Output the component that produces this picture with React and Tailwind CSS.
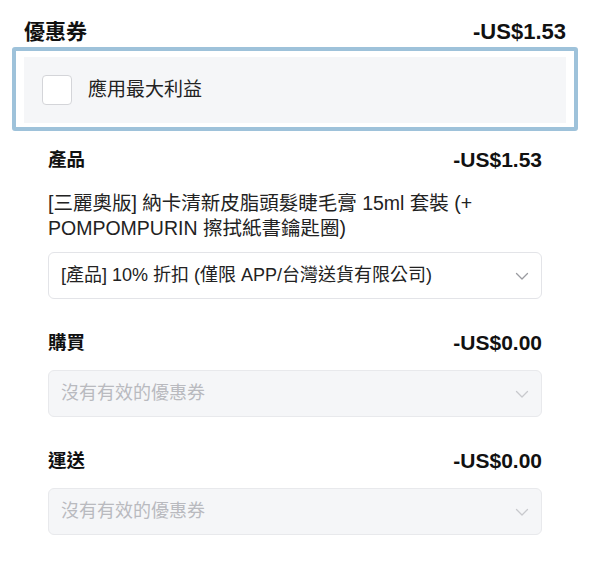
import React from 'react';

const font = { fontFamily: '"Liberation Sans", "Noto Sans CJK TC", sans-serif' };

function Chevron({ className }) {
  return (
    <svg width="14" height="14" viewBox="0 0 14 14" fill="none" className={className}>
      <path d="M1.5 4.5 L7 10 L12.5 4.5" stroke="currentColor" strokeWidth="1.3" strokeLinecap="round" strokeLinejoin="round" />
    </svg>
  );
}

function SelectBox({ label, disabled }) {
  return (
    <div
      className={
        disabled
          ? "flex items-center justify-between h-[47px] px-3 rounded-md border border-[#e8e9ec] bg-[#f5f6f8]"
          : "flex items-center justify-between h-[47px] px-3 rounded-md border border-[#e3e4e8] bg-white"
      }
    >
      <span className={disabled ? "text-[18px] text-[#b9babf]" : "text-[18px] text-[#222]"}>{label}</span>
      <Chevron className={disabled ? "text-[#c8c9cd]" : "text-[#9a9ba0]"} />
    </div>
  );
}

function Section({ title, amount, children }) {
  return (
    <div className="flex flex-col">
      <div className="flex items-center justify-between h-[26px]">
        <span className="text-[18.5px] font-bold text-[#111]">{title}</span>
        <span className="text-[21px] font-bold text-[#111]">{amount}</span>
      </div>
      {children}
    </div>
  );
}

export default function App() {
  return (
    <div className="w-[590px] h-[564px] bg-white px-6 pt-[18px]" style={font}>
      <div className="flex items-center justify-between h-[27px]">
        <span className="text-[21px] font-bold text-[#111]">優惠券</span>
        <span className="text-[22px] font-bold text-[#111]">-US$1.53</span>
      </div>

      {/* highlighted "best benefit" row */}
      <div className="mt-[2px] -mx-3 border-4 border-[#9ec2da] rounded-[3px] px-2 pt-[6px] pb-[4px]">
        <div className="flex items-center gap-4 h-[66px] bg-[#f5f6f8] px-[18px]">
          <div className="w-[30px] h-[30px] rounded-[4px] border border-[#d4d5d9] bg-white" />
          <span className="text-[19px] text-[#222]">應用最大利益</span>
        </div>
      </div>

      <div className="px-6 flex flex-col">
        <div className="mt-[16px]">
          <Section title="產品" amount="-US$1.53">
            <p className="mt-[18px] text-[19.5px] leading-[25px] text-[#222]">
              [三麗奧版] 納卡清新皮脂頭髮睫毛膏 15ml 套裝 (+ POMPOMPURIN 擦拭紙書鑰匙圈)
            </p>
            <div className="mt-[11px]">
              <SelectBox label="[產品] 10% 折扣 (僅限 APP/台灣送貨有限公司)" />
            </div>
          </Section>
        </div>

        <div className="mt-[31px]">
          <Section title="購買" amount="-US$0.00">
            <div className="mt-[14px]">
              <SelectBox label="沒有有效的優惠券" disabled />
            </div>
          </Section>
        </div>

        <div className="mt-[31px]">
          <Section title="運送" amount="-US$0.00">
            <div className="mt-[14px]">
              <SelectBox label="沒有有效的優惠券" disabled />
            </div>
          </Section>
        </div>
      </div>
    </div>
  );
}
